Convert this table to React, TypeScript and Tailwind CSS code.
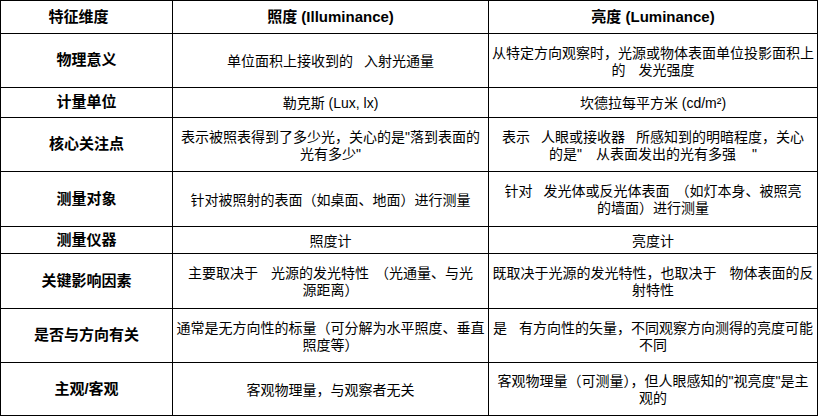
import React from "react";

const G = ({ w = 11 }: { w?: number }) => (
  <span className="inline-block" style={{ width: w }} />
);

type Cell = React.ReactNode[];

const rows: { label: string; a: Cell; b: Cell }[] = [
  {
    label: "物理意义",
    a: [<>单位面积上接收到的<G />入射光通量</>],
    b: [
      <>从特定方向观察时，光源或物体表面单位投影面积上</>,
      <>的<G w={13} />发光强度</>,
    ],
  },
  {
    label: "计量单位",
    a: [<>勒克斯 (Lux, lx)</>],
    b: [<>坎德拉每平方米 (cd/m²)</>],
  },
  {
    label: "核心关注点",
    a: [<>表示被照表得到了多少光，关心的是"落到表面的</>, <>光有多少"</>],
    b: [
      <>表示<G />人眼或接收器<G />所感知到的明暗程度，关心</>,
      <>的是"<G w={14} />从表面发出的光有多强<G w={16} />"</>,
    ],
  },
  {
    label: "测量对象",
    a: [<>针对被照射的表面（如桌面、地面）进行测量</>],
    b: [
      <>针对<G />发光体或反光体表面<G w={6} />（如灯本身、被照亮</>,
      <>的墙面）进行测量</>,
    ],
  },
  {
    label: "测量仪器",
    a: [<>照度计</>],
    b: [<>亮度计</>],
  },
  {
    label: "关键影响因素",
    a: [<>主要取决于<G w={13} />光源的发光特性<G w={6} />（光通量、与光</>, <>源距离）</>],
    b: [<>既取决于光源的发光特性，也取决于<G w={13} />物体表面的反</>, <>射特性</>],
  },
  {
    label: "是否与方向有关",
    a: [<>通常是无方向性的标量（可分解为水平照度、垂直</>, <>照度等）</>],
    b: [<>是<G w={12} />有方向性的矢量，不同观察方向测得的亮度可能</>, <>不同</>],
  },
  {
    label: "主观/客观",
    a: [<>客观物理量，与观察者无关</>],
    b: [<>客观物理量（可测量），但人眼感知的"视亮度"是主</>, <>观的</>],
  },
];

const cellBase =
  "border-r border-b border-black flex flex-col items-center justify-center text-center overflow-hidden";

function Body({ lines }: { lines: Cell }) {
  return (
    <div className={`${cellBase} text-[14px] leading-[17px] pt-[2px]`}>
      {lines.map((l, i) => (
        <div key={i} className="whitespace-nowrap">
          {l}
        </div>
      ))}
    </div>
  );
}

export default function App() {
  return (
    <div
      className="w-[818px] h-[417px] bg-white text-black"
      style={{ fontFamily: '"Liberation Sans", "Noto Sans CJK SC", sans-serif' }}
    >
      <div className="grid grid-cols-[172px_316px_329px] grid-rows-[33px_54px_30px_54px_55px_27px_55px_54px_53px] border-l border-t border-black w-[818px]">
        <div className={`${cellBase} font-bold text-[15px] pr-4`}>特征维度</div>
        <div className={`${cellBase} font-bold text-[15px]`}>照度 (Illuminance)</div>
        <div className={`${cellBase} font-bold text-[15px]`}>亮度 (Luminance)</div>
        {rows.map((r, i) => (
          <React.Fragment key={i}>
            <div className={`${cellBase} font-bold text-[15px]`}>{r.label}</div>
            <Body lines={r.a} />
            <Body lines={r.b} />
          </React.Fragment>
        ))}
      </div>
    </div>
  );
}
